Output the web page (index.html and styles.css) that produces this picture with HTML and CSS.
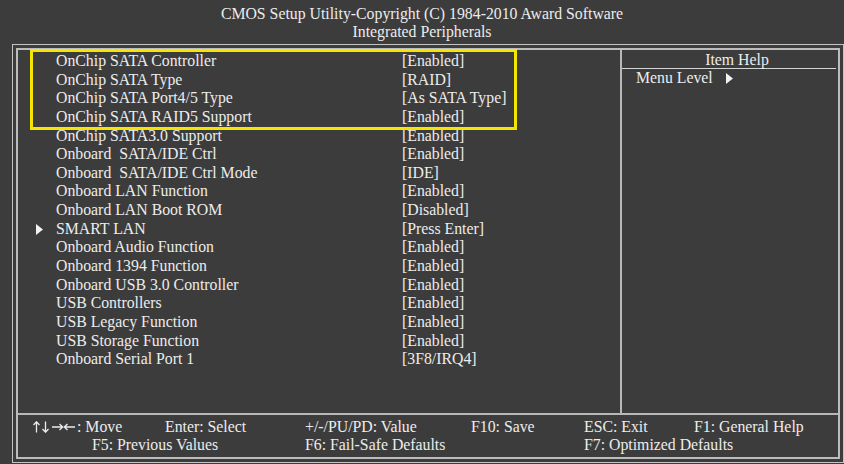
FILE: index.html
```html
<!DOCTYPE html>
<html>
<head>
<meta charset="utf-8">
<link rel="stylesheet" href="styles.css">
</head>
<body>
<div class="title">
  <div>CMOS Setup Utility-Copyright (C) 1984-2010 Award Software</div>
  <div>Integrated Peripherals</div>
</div>
<div class="outer">
  <div class="inner">
    <div class="main">
      <div class="items">
        <div class="highlight"></div>
        <div class="row"><span></span><span>OnChip SATA Controller</span><span>[Enabled]</span></div>
        <div class="row"><span></span><span>OnChip SATA Type</span><span>[RAID]</span></div>
        <div class="row"><span></span><span>OnChip SATA Port4/5 Type</span><span>[As SATA Type]</span></div>
        <div class="row"><span></span><span>OnChip SATA RAID5 Support</span><span>[Enabled]</span></div>
        <div class="row"><span></span><span>OnChip SATA3.0 Support</span><span>[Enabled]</span></div>
        <div class="row"><span></span><span>Onboard&nbsp; SATA/IDE Ctrl</span><span>[Enabled]</span></div>
        <div class="row"><span></span><span>Onboard&nbsp; SATA/IDE Ctrl Mode</span><span>[IDE]</span></div>
        <div class="row"><span></span><span>Onboard LAN Function</span><span>[Enabled]</span></div>
        <div class="row"><span></span><span>Onboard LAN Boot ROM</span><span>[Disabled]</span></div>
        <div class="row"><span class="arrow"><svg width="7" height="11" viewBox="0 0 7 11"><path d="M0 0 L7 5.5 L0 11 Z" fill="#f2f2f2"/></svg></span><span>SMART LAN</span><span>[Press Enter]</span></div>
        <div class="row"><span></span><span>Onboard Audio Function</span><span>[Enabled]</span></div>
        <div class="row"><span></span><span>Onboard 1394 Function</span><span>[Enabled]</span></div>
        <div class="row"><span></span><span>Onboard USB 3.0 Controller</span><span>[Enabled]</span></div>
        <div class="row"><span></span><span>USB Controllers</span><span>[Enabled]</span></div>
        <div class="row"><span></span><span>USB Legacy Function</span><span>[Enabled]</span></div>
        <div class="row"><span></span><span>USB Storage Function</span><span>[Enabled]</span></div>
        <div class="row"><span></span><span>Onboard Serial Port 1</span><span>[3F8/IRQ4]</span></div>
      </div>
      <div class="help">
        <div class="help-head">Item Help</div>
        <div class="help-body">Menu Level <svg class="tri" width="7" height="11" viewBox="0 0 7 11"><path d="M0 0 L7 5.5 L0 11 Z" fill="#f2f2f2"/></svg></div>
      </div>
    </div>
    <div class="footer">
      <div class="f-row">
        <span class="c1"><svg class="arr" width="44" height="12" viewBox="0 0 44 12" aria-label="↑↓→←"><g fill="none" stroke="#ececec" stroke-width="1.3"><path d="M3.5 11.5 V1 M0.5 4 L3.5 0.8 L6.5 4"/><path d="M12.5 0.5 V11 M9.5 8 L12.5 11.2 L15.5 8"/><path d="M19 6 H29.5 M26.5 3 L29.7 6 L26.5 9"/><path d="M42 6 H31.5 M34.5 3 L31.3 6 L34.5 9"/></g></svg>: Move</span>
        <span class="c2">Enter: Select</span>
        <span class="c3">+/-/PU/PD: Value</span>
        <span class="c4">F10: Save</span>
        <span class="c5">ESC: Exit</span>
        <span class="c6">F1: General Help</span>
      </div>
      <div class="f-row">
        <span class="c1b">F5: Previous Values</span>
        <span class="c3b">F6: Fail-Safe Defaults</span>
        <span class="c5b">F7: Optimized Defaults</span>
      </div>
    </div>
  </div>
</div>
</body>
</html>
```

FILE: styles.css
```css
html, body {
  margin: 0;
  padding: 0;
  background: #3c3c3c;
}
body {
  width: 844px;
  height: 464px;
  overflow: hidden;
  font-family: "Liberation Serif", "Times New Roman", serif;
  font-size: 15.8px;
  color: #ececec;
}
.title {
  height: 44px;
  box-sizing: border-box;
  padding-top: 5px;
  text-align: center;
  line-height: 17.5px;
  font-size: 15.8px;
}
.outer {
  margin-left: 12px;
  width: 832px;
  height: 419px;
  box-sizing: border-box;
  border: 1px solid #c4c4c4;
  padding: 3px;
}
.inner {
  height: 100%;
  box-sizing: border-box;
  border: 2px solid #bcbcbc;
  display: flex;
  flex-direction: column;
}
.main {
  height: 363px;
  display: flex;
  border-bottom: 2px solid #b8b8b8;
}
.items {
  position: relative;
  width: 602px;
  padding-top: 2px;
  border-right: 2px solid #b8b8b8;
}
.row {
  display: grid;
  grid-template-columns: 20px 346px 1fr;
  padding-left: 18px;
  height: 18.65px;
  line-height: 18.65px;
  white-space: nowrap;
}
.arrow {
  display: flex;
  align-items: center;
}
.arrow svg {
  display: block;
}
.highlight {
  position: absolute;
  left: 12px;
  top: -1px;
  width: 487px;
  height: 81px;
  box-sizing: border-box;
  border: 3px solid #f4e600;
}
.help {
  flex: 1;
  display: flex;
  flex-direction: column;
}
.help-head {
  height: 18px;
  line-height: 20px;
  border-bottom: 1px solid #d4d4d4;
  margin-right: 2px;
  text-align: center;
  padding-left: 16px;
}
.help-body {
  padding-left: 14px;
  line-height: 18px;
}
.tri {
  margin-left: 9px;
  vertical-align: -1px;
}
.footer {
  flex: 1;
  padding-top: 3px;
}
.f-row {
  height: 18px;
  line-height: 18px;
  display: grid;
  grid-template-columns: 132px 140px 166px 113px 110px 1fr;
  padding-left: 15px;
  white-space: nowrap;
}
.arr {
  vertical-align: -1px;
}
.f-row .c1b { grid-column: 1 / 3; padding-left: 59px; }
.f-row .c3b { grid-column: 3 / 5; }
.f-row .c5b { grid-column: 5 / 7; }
```
